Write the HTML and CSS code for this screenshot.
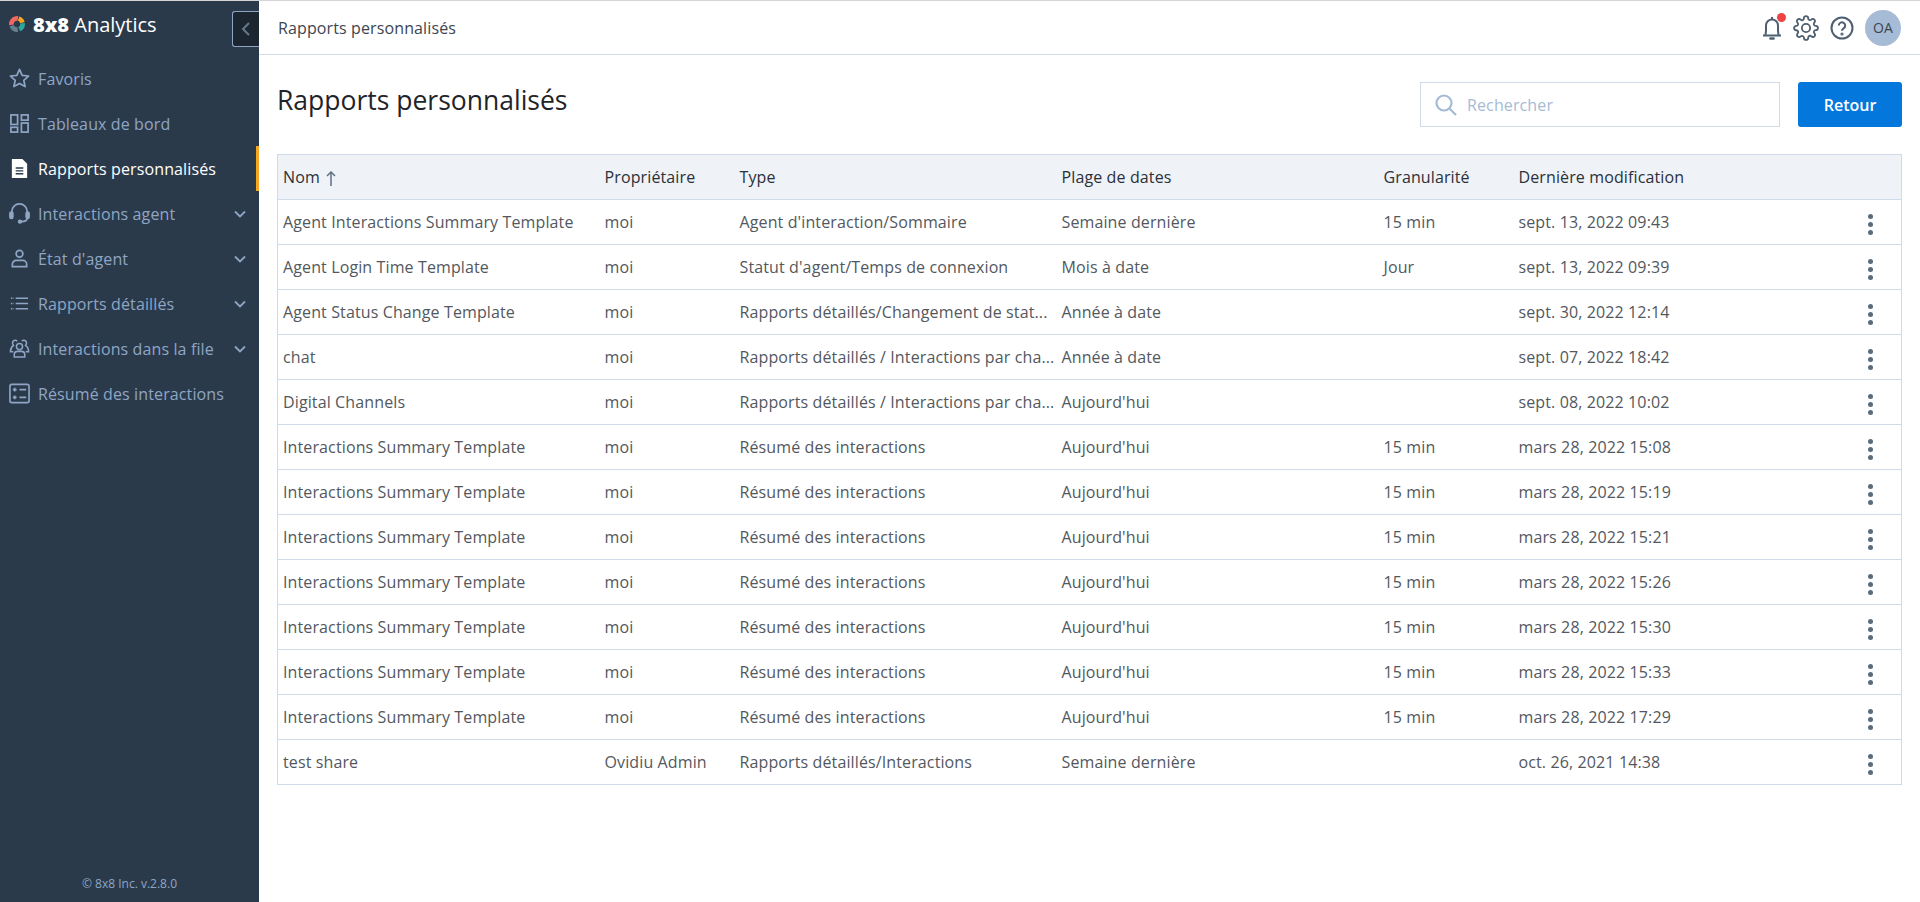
FILE: index.html
```html
<!DOCTYPE html>
<html lang="fr">
<head>
    <meta charset="UTF-8">
    <title>Rapports personnalisés</title>
    <link rel="stylesheet" href="styles.css">
</head>
<body>

<div class="layout">
    <aside class="sidebar">
        <div class="brand">
            <svg class="logo" width="16" height="16" viewBox="0 0 16 16" fill="none" stroke-width="4.6">
                <circle cx="8" cy="8" r="5.6" stroke="#f2675f" stroke-dasharray="10.5 30" transform="rotate(170 8 8)"/>
                <circle cx="8" cy="8" r="5.6" stroke="#f5a623" stroke-dasharray="5.5 30" transform="rotate(287 8 8)"/>
                <circle cx="8" cy="8" r="5.6" stroke="#2fa89c" stroke-dasharray="7 30" transform="rotate(352 8 8)"/>
                <circle cx="8" cy="8" r="5.6" stroke="#64808f" stroke-dasharray="7.5 30" transform="rotate(82 8 8)"/>
            </svg>
            <span class="brand-name"><b>8x8</b> Analytics</span>
            <button class="collapse">
                <svg width="10" height="14" viewBox="0 0 10 14" fill="none" stroke="#64788c" stroke-width="2"><path d="M8 1 2 7l6 6"/></svg>
            </button>
        </div>

        <nav class="nav">
            <a class="nav-item">
                <svg class="nav-icon" viewBox="0 0 22 22" fill="none" stroke="#8ea6c4" stroke-width="1.8" stroke-linejoin="round"><path d="M11 1.5l2.8 6.2 6.7.7-5 4.5 1.4 6.6L11 16.2l-5.9 3.3 1.4-6.6-5-4.5 6.7-.7z"/></svg>
                <span>Favoris</span>
            </a>
            <a class="nav-item">
                <svg class="nav-icon" viewBox="0 0 22 22" fill="none" stroke="#8ea6c4" stroke-width="1.8"><rect x="2" y="2" width="7" height="10"/><rect x="13" y="2" width="7" height="5.5"/><rect x="2" y="15" width="7" height="5"/><rect x="13" y="10.5" width="7" height="9.5"/></svg>
                <span>Tableaux de bord</span>
            </a>
            <a class="nav-item active">
                <svg class="nav-icon" viewBox="0 0 22 22"><path fill="#fff" d="M3 1h11l5 5v15H3z"/><path stroke="#2b3a4b" stroke-width="1.4" d="M7 10.5h8M7 13.5h8M7 16.5h8"/></svg>
                <span>Rapports personnalisés</span>
            </a>
            <a class="nav-item">
                <svg class="nav-icon" viewBox="0 0 22 22" fill="none" stroke="#8ea6c4" stroke-width="1.8"><path d="M3 11V9a8 8 0 0 1 16 0v2"/><rect x="1" y="9.5" width="3" height="6.5" rx="1.4" fill="#8ea6c4"/><rect x="18" y="9.5" width="3" height="6.5" rx="1.4" fill="#8ea6c4"/><path d="M19 16c0 2.5-2.5 3.5-6 3.5"/><circle cx="11.5" cy="19.5" r="1.4" fill="#8ea6c4"/></svg>
                <span>Interactions agent</span>
                <svg class="chevron" width="12" height="8" viewBox="0 0 12 8" fill="none" stroke="#8ea6c4" stroke-width="1.8"><path d="M1 1.5l5 5 5-5"/></svg>
            </a>
            <a class="nav-item">
                <svg class="nav-icon" viewBox="0 0 22 22" fill="none" stroke="#8ea6c4" stroke-width="1.8"><circle cx="11" cy="6" r="3.5"/><path d="M3.5 19.5V17a4 4 0 0 1 4-4h7a4 4 0 0 1 4 4v2.500z"/></svg>
                <span>État d'agent</span>
                <svg class="chevron" width="12" height="8" viewBox="0 0 12 8" fill="none" stroke="#8ea6c4" stroke-width="1.8"><path d="M1 1.5l5 5 5-5"/></svg>
            </a>
            <a class="nav-item">
                <svg class="nav-icon" viewBox="0 0 22 22" fill="none" stroke="#8ea6c4" stroke-width="1.6"><path d="M7 5.5h13M7 11h13M7 16.5h13"/><path stroke-dasharray="1.5 1" d="M2 5.5h3M2 11h3M2 16.5h3"/></svg>
                <span>Rapports détaillés</span>
                <svg class="chevron" width="12" height="8" viewBox="0 0 12 8" fill="none" stroke="#8ea6c4" stroke-width="1.8"><path d="M1 1.5l5 5 5-5"/></svg>
            </a>
            <a class="nav-item">
                <svg class="nav-icon" viewBox="0 0 22 22" fill="none" stroke="#8ea6c4" stroke-width="1.6"><circle cx="11" cy="9" r="3.2"/><path d="M5.5 20v-2.500A3.500 3.500 0 0 1 9 14h4a3.500 3.500 0 0 1 3.500 3.500V20z"/><path d="M8.500 3.500a2.700 2.700 0 0 0-4.800 2c0 1 .5 1.700 1 2.300C3 9 1.500 11 1.500 14.500h3M13.500 3.500a2.700 2.700 0 0 1 4.800 2c0 1-.5 1.700-1 2.300 2 1.200 3.200 3.200 3.200 6.700h-3"/></svg>
                <span>Interactions dans la file</span>
                <svg class="chevron" width="12" height="8" viewBox="0 0 12 8" fill="none" stroke="#8ea6c4" stroke-width="1.8"><path d="M1 1.5l5 5 5-5"/></svg>
            </a>
            <a class="nav-item">
                <svg class="nav-icon" viewBox="0 0 22 22" fill="none" stroke="#8ea6c4" stroke-width="1.7"><rect x="1" y="1.5" width="20" height="19" rx="2"/><path d="M11 7h7M11 15h7M4 7h4M6 5v4M4 15h4M6 13v4"/></svg>
                <span>Résumé des interactions</span>
            </a>
        </nav>

        <div class="copyright">© 8x8 Inc. v.2.8.0</div>
    </aside>

    <div class="main">
        <header class="topbar">
            <span class="crumb">Rapports personnalisés</span>
            <div class="top-icons">
                <span class="bell">
                    <svg width="20" height="24" viewBox="0 0 20 24" fill="none" stroke="#4d5f70" stroke-width="2" stroke-linejoin="round"><path d="M1 19.5h18M3.500 19.5c0-2 .5-3 .5-5.500V9.500a6 6 0 0 1 12 0V14c0 2.500.5 3.500.5 5.500"/><path d="M10 1v2.500"/><path d="M8.500 22.500h3" stroke-width="2.600" stroke-linecap="round"/></svg>
                    <i class="dot"></i>
                </span>
                <svg width="26" height="26" viewBox="0 0 24 24" fill="none" stroke="#4d5f70" stroke-width="1.7" stroke-linejoin="round"><circle cx="12" cy="12" r="3.8"/><path d="M19.4 15a1.65 1.65 0 0 0 .33 1.82l.06.06a2 2 0 0 1 0 2.83 2 2 0 0 1-2.83 0l-.06-.06a1.65 1.65 0 0 0-1.82-.33 1.65 1.65 0 0 0-1 1.51V21a2 2 0 0 1-2 2 2 2 0 0 1-2-2v-.09A1.65 1.65 0 0 0 9 19.4a1.65 1.65 0 0 0-1.82.33l-.06.06a2 2 0 0 1-2.83 0 2 2 0 0 1 0-2.83l.06-.06a1.65 1.65 0 0 0 .33-1.82 1.65 1.65 0 0 0-1.51-1H3a2 2 0 0 1-2-2 2 2 0 0 1 2-2h.09A1.65 1.65 0 0 0 4.6 9a1.65 1.65 0 0 0-.33-1.82l-.06-.06a2 2 0 0 1 0-2.83 2 2 0 0 1 2.83 0l.06.06a1.65 1.65 0 0 0 1.82.33H9a1.65 1.65 0 0 0 1-1.51V3a2 2 0 0 1 2-2 2 2 0 0 1 2 2v.09a1.65 1.65 0 0 0 1 1.51 1.65 1.65 0 0 0 1.82-.33l.06-.06a2 2 0 0 1 2.83 0 2 2 0 0 1 0 2.83l-.06.06a1.65 1.65 0 0 0-.33 1.82V9a1.65 1.65 0 0 0 1.51 1H21a2 2 0 0 1 2 2 2 2 0 0 1-2 2h-.09a1.65 1.65 0 0 0-1.51 1z"/></svg>
                <svg width="24" height="24" viewBox="0 0 24 24" fill="none" stroke="#4d5f70" stroke-width="2"><circle cx="12" cy="12" r="10.5"/><path d="M8.800 9.500a3.200 3.200 0 1 1 4.800 2.800c-1 .6-1.600 1.200-1.600 2.400"/><circle cx="12" cy="18" r=".6"/></svg>
                <div class="avatar">OA</div>
            </div>
        </header>

        <section class="content">
            <div class="title-row">
                <h1>Rapports personnalisés</h1>
                <div class="search">
                    <svg width="24" height="24" viewBox="0 0 24 24" fill="none" stroke="#a5bbd6" stroke-width="2.2"><circle cx="10" cy="10" r="7.5"/><path d="M15.500 15.500 22 22"/></svg>
                    <span>Rechercher</span>
                </div>
                <button class="back">Retour</button>
            </div>

            <table class="reports">
                <colgroup>
                    <col class="c-name"><col class="c-owner"><col class="c-type"><col class="c-range"><col class="c-gran"><col class="c-date"><col>
                </colgroup>
                <thead>
                    <tr>
                        <th>Nom <svg class="sort" width="10" height="15" viewBox="0 0 10 15" fill="none" stroke="#5f7386" stroke-width="1.5"><path d="M5 15V1M1 5l4-4 4 4"/></svg></th>
                        <th>Propriétaire</th>
                        <th>Type</th>
                        <th>Plage de dates</th>
                        <th>Granularité</th>
                        <th>Dernière modification</th>
                        <th></th>
                    </tr>
                </thead>
                <tbody id="rows"></tbody>
            </table>
        </section>
    </div>
</div>

<script>
    const reports = [
        ["Agent Interactions Summary Template", "moi", "Agent d'interaction/Sommaire", "Semaine dernière", "15 min", "sept. 13, 2022 09:43"],
        ["Agent Login Time Template", "moi", "Statut d'agent/Temps de connexion", "Mois à date", "Jour", "sept. 13, 2022 09:39"],
        ["Agent Status Change Template", "moi", "Rapports détaillés/Changement de stat...", "Année à date", "", "sept. 30, 2022 12:14"],
        ["chat", "moi", "Rapports détaillés / Interactions par cha...", "Année à date", "", "sept. 07, 2022 18:42"],
        ["Digital Channels", "moi", "Rapports détaillés / Interactions par cha...", "Aujourd'hui", "", "sept. 08, 2022 10:02"],
        ["Interactions Summary Template", "moi", "Résumé des interactions", "Aujourd'hui", "15 min", "mars 28, 2022 15:08"],
        ["Interactions Summary Template", "moi", "Résumé des interactions", "Aujourd'hui", "15 min", "mars 28, 2022 15:19"],
        ["Interactions Summary Template", "moi", "Résumé des interactions", "Aujourd'hui", "15 min", "mars 28, 2022 15:21"],
        ["Interactions Summary Template", "moi", "Résumé des interactions", "Aujourd'hui", "15 min", "mars 28, 2022 15:26"],
        ["Interactions Summary Template", "moi", "Résumé des interactions", "Aujourd'hui", "15 min", "mars 28, 2022 15:30"],
        ["Interactions Summary Template", "moi", "Résumé des interactions", "Aujourd'hui", "15 min", "mars 28, 2022 15:33"],
        ["Interactions Summary Template", "moi", "Résumé des interactions", "Aujourd'hui", "15 min", "mars 28, 2022 17:29"],
        ["test share", "Ovidiu Admin", "Rapports détaillés/Interactions", "Semaine dernière", "", "oct. 26, 2021 14:38"]
    ];

    const tbody = document.getElementById("rows");
    reports.forEach(report => {
        const tr = document.createElement("tr");
        report.forEach(text => {
            const td = document.createElement("td");
            td.textContent = text;
            tr.appendChild(td);
        });
        const menu = document.createElement("td");
        menu.className = "menu";
        menu.innerHTML = '<span class="kebab"><i></i><i></i><i></i></span>';
        tr.appendChild(menu);
        tbody.appendChild(tr);
    });
</script>

</body>
</html>
```

FILE: styles.css
```css
* {
    box-sizing: border-box;
}

body {
    margin: 0;
    font-family: "Open Sans", sans-serif;
    font-size: 16px;
    letter-spacing: 0.12px;
    color: #53585e;
    background: #fff;
    border-top: 1px solid #d4d4d4;
}

.layout {
    display: flex;
    height: 901px;
}

/* Sidebar */
.sidebar {
    width: 259px;
    flex-shrink: 0;
    background-color: #2b3a4b;
    display: flex;
    flex-direction: column;
}

.brand {
    height: 46px;
    margin-bottom: 9px;
    display: flex;
    align-items: center;
    padding-left: 9px;
    position: relative;
}

.brand-name {
    margin-left: 8px;
    font-size: 20px;
    letter-spacing: 0;
    color: #fff;
}

.brand-name b {
    font-weight: 800;
}

.collapse {
    position: absolute;
    right: 0;
    top: 10px;
    width: 27px;
    height: 36px;
    padding: 0;
    background-color: #1c2631;
    border: 1px solid #8ea6c4;
    border-right: none;
    border-radius: 3px 0 0 3px;
    display: flex;
    align-items: center;
    justify-content: center;
}

.nav {
    flex: 1;
}

.nav-item {
    height: 45px;
    display: flex;
    align-items: center;
    padding: 0 13px 0 9px;
    color: #8ea6c4;
}

.nav-item.active {
    color: #fff;
    border-right: 3px solid #f5a623;
    padding-right: 10px;
}

.nav-icon {
    width: 21px;
    height: 21px;
    margin-right: 8px;
    flex-shrink: 0;
}

.chevron {
    margin-left: auto;
}

.copyright {
    padding-bottom: 10px;
    text-align: center;
    font-size: 12px;
    letter-spacing: 0;
    color: #8ea6c4;
}

/* Main */
.main {
    flex: 1;
    min-width: 0;
}

.topbar {
    height: 54px;
    border-bottom: 1px solid #d0dbe9;
    display: flex;
    align-items: center;
    justify-content: space-between;
    padding: 0 19px 0 19px;
}

.crumb {
    color: #3d4650;
}

.top-icons {
    display: flex;
    align-items: center;
    gap: 11px;
}

.bell {
    position: relative;
    display: flex;
}

.dot {
    position: absolute;
    top: -3px;
    right: -4px;
    width: 9px;
    height: 9px;
    border-radius: 50%;
    background-color: #ee4444;
}

.avatar {
    width: 36px;
    height: 36px;
    border-radius: 50%;
    background-color: #a5bbd6;
    color: #3d4650;
    font-size: 14px;
    display: flex;
    align-items: center;
    justify-content: center;
}

.content {
    padding: 27px 18px 0 18px;
}

.title-row {
    display: flex;
    align-items: center;
    height: 45px;
    margin-bottom: 27px;
}

h1 {
    margin: -10px auto 0 0;
    font-size: 26.5px;
    font-weight: 400;
    letter-spacing: 0;
    color: #1f2429;
}

.search {
    width: 360px;
    height: 45px;
    border: 1px solid #d0dbe9;
    display: flex;
    align-items: center;
    gap: 9px;
    padding-left: 13px;
    color: #a5bbd6;
}

.back {
    width: 104px;
    height: 45px;
    margin-left: 18px;
    border: none;
    border-radius: 3px;
    background-color: #0477dc;
    color: #fff;
    font-family: inherit;
    font-size: 16px;
    font-weight: 600;
}

/* Table */
.reports {
    width: 100%;
    table-layout: fixed;
    border-collapse: collapse;
    border: 1px solid #d0dbe9;
}

.c-name { width: 322px; }
.c-owner { width: 135px; }
.c-type { width: 322px; }
.c-range { width: 322px; }
.c-gran { width: 135px; }
.c-date { width: 322px; }

th, td {
    height: 45px;
    padding: 0 5px;
    text-align: left;
    white-space: nowrap;
    font-weight: 400;
    border-bottom: 1px solid #d0dbe9;
}

th {
    background-color: #eff2f7;
    color: #2b3138;
}

.sort {
    margin-left: 2px;
    vertical-align: -3px;
}

td.menu {
    text-align: right;
    padding-right: 28px;
    padding-top: 3px;
}

.kebab {
    display: inline-flex;
    flex-direction: column;
    gap: 3px;
    vertical-align: middle;
}

.kebab i {
    width: 5px;
    height: 5px;
    border-radius: 50%;
    background-color: #5a6b7b;
}
```
